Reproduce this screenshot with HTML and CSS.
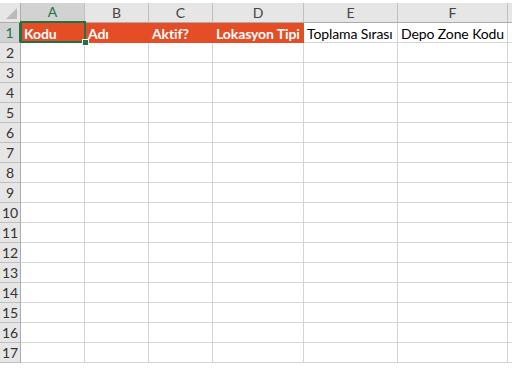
FILE: index.html
```html
<!DOCTYPE html>
<html>
<head>
    <title>Sheet1</title>
    <meta name="viewport" content="width=device-width, initial-scale=1">
    <link rel="stylesheet" href="styles.css">
</head>
<body>
    <div class="sheet">
        <div class="grid" id="grid">
            <div class="corner"><span class="corner-mark"></span></div>
            <div class="col-head active">A</div>
            <div class="col-head">B</div>
            <div class="col-head">C</div>
            <div class="col-head">D</div>
            <div class="col-head">E</div>
            <div class="col-head">F</div>
            <div class="col-head last"></div>

            <div class="row-head active">1</div>
            <div class="cell fill">Kodu</div>
            <div class="cell fill">Adı</div>
            <div class="cell fill">Aktif?</div>
            <div class="cell fill">Lokasyon Tipi</div>
            <div class="cell">Toplama Sırası</div>
            <div class="cell">Depo Zone Kodu</div>
            <div class="cell last"></div>
        </div>
        <div class="selection"><span class="handle"></span></div>
    </div>

    <script>
        // Empty rows 2..17
        const grid = document.getElementById("grid");
        for (let r = 2; r <= 17; r++) {
            let html = `<div class="row-head">${r}</div>`;
            for (let c = 0; c < 6; c++) {
                html += `<div class="cell"></div>`;
            }
            html += `<div class="cell last"></div>`;
            grid.insertAdjacentHTML("beforeend", html);
        }
    </script>
</body>
</html>
```

FILE: styles.css
```css
body {
    margin: 0;
    background-color: #fff;
    font-family: Lato, "Open Sans", sans-serif;
    font-size: 14px;
    color: #000;
    overflow: hidden;
}
.sheet {
    position: relative;
    padding-top: 3px;
}
.grid {
    display: grid;
    grid-template-columns: 21px 64px 64px 64px 91px 94px 110px 1fr;
    grid-auto-rows: 20px;
}
.grid > div {
    box-sizing: border-box;
    border-right: 1px solid #d4d4d4;
    border-bottom: 1px solid #d4d4d4;
    white-space: nowrap;
    overflow: hidden;
}
.grid > div.last {
    border-right: none;
}
.corner {
    position: relative;
    background-color: #e6e6e6;
}
.grid > .corner {
    border-right-color: #ababab;
    border-bottom-color: #ababab;
}
.corner-mark {
    position: absolute;
    right: 3px;
    bottom: 3px;
    width: 0;
    height: 0;
    border-left: 11px solid transparent;
    border-bottom: 11px solid #b9b9b9;
}
.col-head {
    background-color: #e6e6e6;
    color: #444;
    text-align: center;
    line-height: 19px;
    font-size: 14px;
}
.grid > .col-head {
    border-right-color: #bfbfbf;
    border-bottom-color: #ababab;
}
.grid > .col-head.active {
    background-color: #d2d2d2;
    color: #217346;
    border-bottom: 2px solid #217346;
    line-height: 18px;
}
.row-head {
    background-color: #e6e6e6;
    color: #333;
    font-size: 14px;
    line-height: 20px;
    text-align: center;
}
.grid > .row-head {
    border-right-color: #ababab;
    border-bottom-color: #bfbfbf;
}
.grid > .row-head.active {
    background-color: #d2d2d2;
    color: #217346;
    border-right: 2px solid #217346;
}
.cell {
    padding: 0 3px;
    line-height: 21px;
    letter-spacing: -0.1px;
}
.grid > .cell.fill {
    background-color: #e44d26;
    border-color: #e44d26;
    color: #fff;
    font-weight: bold;
}
.selection {
    position: absolute;
    left: 20px;
    top: 21px;
    width: 62px;
    height: 18px;
    border: 2px solid #217346;
}
.handle {
    position: absolute;
    right: -5px;
    bottom: -5px;
    width: 5px;
    height: 5px;
    background-color: #217346;
    border: 1px solid #fff;
}
```
